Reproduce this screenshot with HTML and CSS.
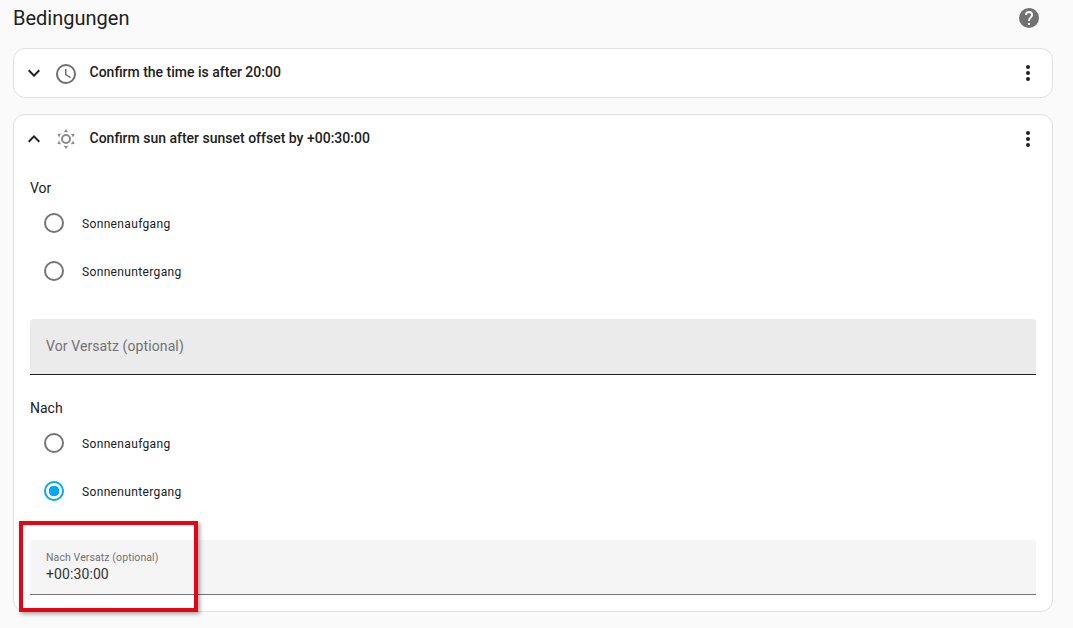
FILE: index.html
```html
<!DOCTYPE html>
<html lang="en">
<head>
  <meta charset="UTF-8">
  <title>Bedingungen</title>
  <link rel="stylesheet" href="styles.css">
</head>
<body>

<!-- Section title -->
<div class="section-head">
  <h1>Bedingungen</h1>
  <svg class="help-icon" viewBox="0 0 24 24"><path d="M15.07,11.25L14.17,12.17C13.45,12.89 13,13.5 13,15H11V14.5C11,13.39 11.45,12.39 12.17,11.67L13.41,10.41C13.78,10.05 14,9.55 14,9C14,7.89 13.1,7 12,7A2,2 0 0,0 10,9H8A4,4 0 0,1 12,5A4,4 0 0,1 16,9C16,9.88 15.64,10.67 15.07,11.25M13,19H11V17H13M12,2A10,10 0 0,0 2,12A10,10 0 0,0 12,22A10,10 0 0,0 22,12C22,6.47 17.5,2 12,2Z"/></svg>
</div>

<!-- Collapsed condition -->
<div class="card card-closed">
  <div class="card-head">
    <svg class="chevron" viewBox="0 0 24 24"><path d="M7.41,8.58L12,13.17L16.59,8.58L18,10L12,16L6,10L7.41,8.58Z"/></svg>
    <svg class="type-icon clock-icon" viewBox="0 0 24 24"><path d="M12,20A8,8 0 0,0 20,12A8,8 0 0,0 12,4A8,8 0 0,0 4,12A8,8 0 0,0 12,20M12,2A10,10 0 0,1 22,12A10,10 0 0,1 12,22C6.47,22 2,17.5 2,12A10,10 0 0,1 12,2M12.5,7V12.25L17,14.92L16.25,16.15L11,13V7H12.5Z"/></svg>
    <span class="card-title">Confirm the time is after 20:00</span>
    <svg class="menu-icon" viewBox="0 0 24 24"><path d="M12,16A2,2 0 0,1 14,18A2,2 0 0,1 12,20A2,2 0 0,1 10,18A2,2 0 0,1 12,16M12,10A2,2 0 0,1 14,12A2,2 0 0,1 12,14A2,2 0 0,1 10,12A2,2 0 0,1 12,10M12,4A2,2 0 0,1 14,6A2,2 0 0,1 12,8A2,2 0 0,1 10,6A2,2 0 0,1 12,4Z"/></svg>
  </div>
</div>

<!-- Expanded condition -->
<div class="card card-open">
  <div class="card-head">
    <svg class="chevron" viewBox="0 0 24 24"><path d="M7.41,15.41L12,10.83L16.59,15.41L18,14L12,8L6,14L7.41,15.41Z"/></svg>
    <svg class="type-icon sun-icon" viewBox="0 0 24 24"><path d="M12,7A5,5 0 0,1 17,12A5,5 0 0,1 12,17A5,5 0 0,1 7,12A5,5 0 0,1 12,7M12,9A3,3 0 0,0 9,12A3,3 0 0,0 12,15A3,3 0 0,0 15,12A3,3 0 0,0 12,9M12,2L14.39,5.42C13.65,5.15 12.84,5 12,5C11.16,5 10.35,5.15 9.61,5.42L12,2M3.34,7L7.5,6.65C6.9,7.16 6.36,7.78 5.94,8.5C5.5,9.24 5.25,10 5.11,10.79L3.34,7M3.36,17L5.12,13.23C5.26,14 5.53,14.78 5.95,15.5C6.37,16.24 6.91,16.86 7.5,17.37L3.36,17M20.65,7L18.88,10.79C18.74,10 18.47,9.23 18.05,8.5C17.63,7.78 17.1,7.15 16.5,6.64L20.65,7M20.64,17L16.5,17.36C17.09,16.85 17.62,16.22 18.04,15.5C18.46,14.77 18.73,14 18.87,13.21L20.64,17M12,22L9.59,18.56C10.33,18.83 11.14,19 12,19C12.82,19 13.63,18.83 14.37,18.56L12,22Z"/></svg>
    <span class="card-title">Confirm sun after sunset offset by +00:30:00</span>
    <svg class="menu-icon" viewBox="0 0 24 24"><path d="M12,16A2,2 0 0,1 14,18A2,2 0 0,1 12,20A2,2 0 0,1 10,18A2,2 0 0,1 12,16M12,10A2,2 0 0,1 14,12A2,2 0 0,1 12,14A2,2 0 0,1 10,12A2,2 0 0,1 12,10M12,4A2,2 0 0,1 14,6A2,2 0 0,1 12,8A2,2 0 0,1 10,6A2,2 0 0,1 12,4Z"/></svg>
  </div>

  <div class="card-body">
    <div class="group-label">Vor</div>
    <div class="radio-row"><span class="radio"></span><span class="radio-text">Sonnenaufgang</span></div>
    <div class="radio-row"><span class="radio"></span><span class="radio-text">Sonnenuntergang</span></div>
    <div class="field field-empty">
      <span class="field-placeholder">Vor Versatz (optional)</span>
    </div>

    <div class="group-label group-label-second">Nach</div>
    <div class="radio-row"><span class="radio"></span><span class="radio-text">Sonnenaufgang</span></div>
    <div class="radio-row"><span class="radio radio-on"></span><span class="radio-text">Sonnenuntergang</span></div>
    <div class="field field-filled">
      <span class="field-label">Nach Versatz (optional)</span>
      <span class="field-value">+00:30:00</span>
      <!-- Red annotation from the screenshot -->
      <div class="highlight-box"></div>
    </div>
  </div>
</div>

</body>
</html>
```

FILE: styles.css
```css
html, body {
  height: 100%;
}

body {
  margin: 0;
  padding: 0 20px 0 13px;
  background-color: #fafafa;
  color: #212121;
  font-family: 'Roboto', sans-serif;
  overflow: hidden;
}

.section-head {
  display: flex;
  align-items: center;
  justify-content: space-between;
  height: 36px;
  margin-bottom: 12px;
}

h1 {
  margin: 0;
  font-size: 20px;
  font-weight: 400;
  line-height: 36px;
}

.help-icon {
  width: 24px;
  height: 24px;
  margin-right: 12px;
  fill: #727272;
}

.card {
  background-color: #ffffff;
  border: 1px solid #e0e0e0;
  border-radius: 12px;
  box-sizing: border-box;
}

.card-open {
  height: 498px;
}

.card-closed {
  height: 50px;
  margin-bottom: 16px;
}

.card-head {
  display: flex;
  align-items: center;
  height: 48px;
  padding: 0 12px 0 8px;
}

.chevron {
  width: 24px;
  height: 24px;
  fill: #212121;
}

.type-icon {
  width: 24px;
  height: 24px;
  margin-left: 8px;
  fill: #727272;
}

.clock-icon {
  margin-top: 2px;
}

.sun-icon {
  fill: #8c8c8c;
}

.card-title {
  flex: 1;
  margin-left: 11.5px;
  margin-bottom: 2px;
  font-size: 14px;
  font-weight: 500;
}

.menu-icon {
  width: 24px;
  height: 24px;
  fill: #212121;
}

.card-body {
  padding: 14px 16px 0;
}

.group-label {
  height: 20px;
  margin-top: 1px;
  font-size: 14px;
  line-height: 20px;
}

.group-label-second {
  margin-top: 23px;
}

.radio-row {
  display: flex;
  align-items: center;
  height: 48px;
  padding-left: 14px;
}

.group-label + .radio-row {
  margin-top: 1px;
}

.radio {
  box-sizing: border-box;
  width: 20px;
  height: 20px;
  border: 2px solid #757575;
  border-radius: 50%;
}

.radio-on {
  border-color: #03a9f4;
  background: radial-gradient(circle, #03a9f4 0 5px, transparent 5.5px);
}

.radio-text {
  margin-left: 18px;
  margin-top: 2px;
  font-size: 12px;
  letter-spacing: 0.35px;
  color: #212121;
}

.field {
  position: relative;
  box-sizing: border-box;
  display: flex;
  flex-direction: column;
  height: 56px;
  padding: 0 16px;
  border-radius: 4px 4px 0 0;
}

.field-empty {
  justify-content: center;
  margin-top: 24px;
  background-color: #ebebeb;
  border-bottom: 1px solid #212121;
}

.field-placeholder {
  margin-bottom: 2px;
  font-size: 14px;
  letter-spacing: 0.1px;
  color: #727272;
}

.field-filled {
  height: 55px;
  margin-top: 25px;
  padding-top: 11px;
  background-color: #f5f5f5;
  border-bottom: 1px solid #757575;
}

.field-label {
  font-size: 10.5px;
  letter-spacing: 0.1px;
  line-height: 13px;
  color: #727272;
}

.field-value {
  margin-top: 2px;
  font-size: 14px;
  letter-spacing: 0.1px;
  line-height: 17px;
  color: #333333;
}

.highlight-box {
  position: absolute;
  left: -11px;
  top: -19px;
  box-sizing: border-box;
  width: 179px;
  height: 91px;
  border: 4px solid #e30613;
  box-shadow: 2px 2px 4px rgba(0, 0, 0, 0.35);
}
```
